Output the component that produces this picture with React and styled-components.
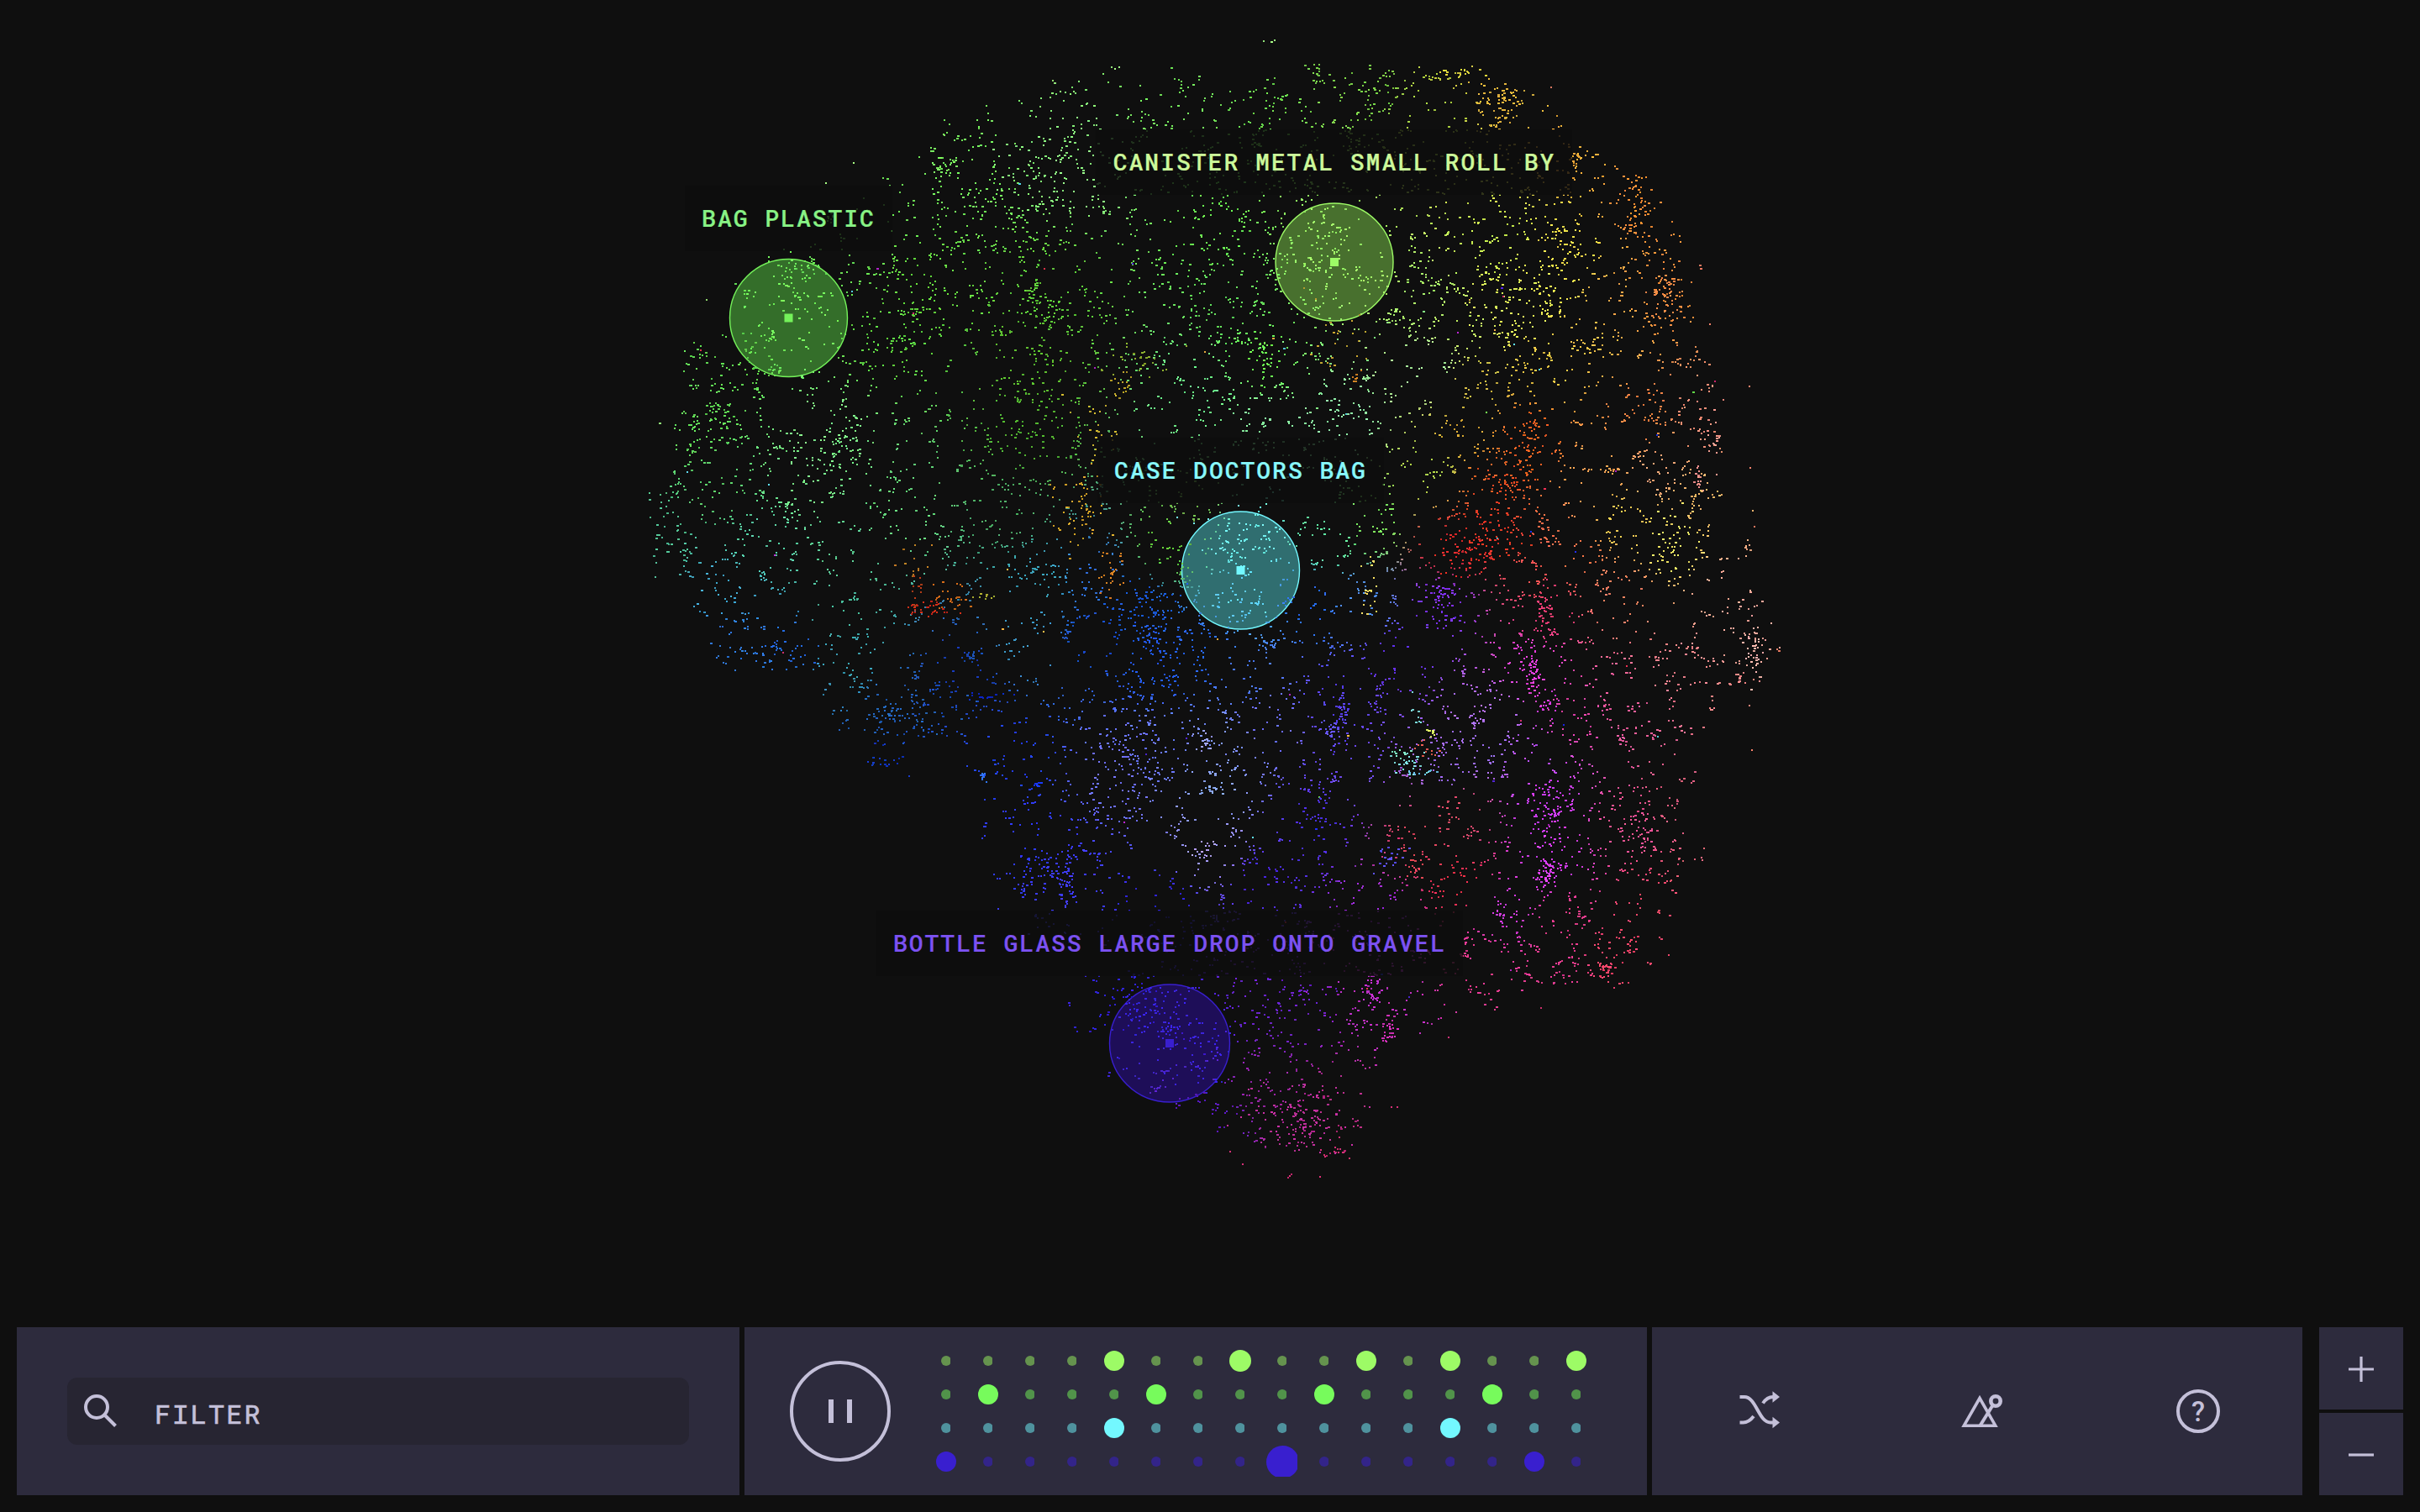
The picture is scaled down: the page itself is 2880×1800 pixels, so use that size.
import React from "react";
import styled, { createGlobalStyle } from "styled-components";

const GlobalStyle = createGlobalStyle`
  *, *::before, *::after { box-sizing: border-box; }
  html, body { margin: 0; padding: 0; background: #0f0f0f; }
  body { overflow: hidden; }
`;

const MONO = `"Roboto Mono", "DejaVu Sans Mono", "Liberation Mono", monospace`;
const INK = "#c4c0d9";
const PANEL = "#2d2b3d";

/* ---------- sound map data ---------- */

const CELL = 60;
const ORIGIN = { x: 740, y: 40 };

// One digit per 60px cell: how crowded that part of the map is.
const DENSITY = [
  "00000000111214133000000",
  "00000012324454533740000",
  "00000154642444444343100",
  "00012267633656434655500",
  "00043645516656454674620",
  "01444656652664467763610",
  "05555324645454325466420",
  "16435236532564633533651",
  "06656335463333346644450",
  "55561454344323424664641",
  "24542236646543365436333",
  "04324331467565345583134",
  "02135324236643434564555",
  "00013653346654545565423",
  "00002213356445456543410",
  "00000003475246235385630",
  "00000003641355354365520",
  "00000001432555334653210",
  "00000000034444534665300",
  "00000000126354521200000",
  "00000000013334300000000",
  "00000000001577300000000",
  "00000000000023100000000",
];

// Coastline of the cloud, in half-scale units.
const COAST = [
  [635, 68], [660, 64], [690, 45], [735, 42], [800, 40], [885, 38], [950, 43], [985, 55], [1005, 68],
  [1030, 98], [1063, 110], [1078, 135], [1092, 155], [1102, 180], [1097, 212], [1118, 235], [1115, 292],
  [1100, 302], [1134, 332], [1134, 370], [1140, 385], [1152, 425], [1138, 456], [1117, 460], [1112, 470],
  [1098, 515], [1108, 560], [1088, 600], [1082, 625], [1045, 640], [1000, 638], [975, 658], [950, 658],
  [905, 673], [892, 690], [886, 702], [886, 725], [876, 747], [840, 748], [775, 730], [725, 712],
  [705, 692], [688, 665], [690, 635], [650, 590], [632, 565], [636, 500], [612, 492], [590, 502],
  [556, 498], [555, 482], [525, 462], [522, 432], [500, 436], [464, 438], [456, 402], [425, 375],
  [415, 322], [440, 300], [430, 262], [442, 225], [462, 205], [475, 180], [505, 160], [530, 130],
  [556, 112], [598, 95], [608, 76],
].map(([x, y]) => [x * 1.8367, y * 1.8367]);

// Hue anchors; each sound takes a blend of the ones nearest to it.
const ANCHORS = [
  [1150, 200, "#74ee5c"], [1280, 200, "#8cf480"], [1000, 300, "#68e052"], [1100, 350, "#62d83e"],
  [1250, 340, "#5fcc3a"], [1230, 430, "#58b82e"], [1220, 520, "#4fb030"], [1060, 400, "#5ccf3e"],
  [940, 378, "#77fb5c"], [880, 420, "#5fd84e"], [830, 500, "#62dc58"], [980, 520, "#84f088"],
  [960, 570, "#78ea88"], [860, 580, "#58c868"], [780, 640, "#4fbf92"], [900, 640, "#56cfa6"],
  [1070, 600, "#66d97a"], [1200, 600, "#4aa860"], [1000, 660, "#5ac890"], [860, 700, "#3fa8cc"],
  [860, 760, "#2f78d8"], [930, 770, "#2468d8"], [1000, 720, "#48b898"], [1010, 785, "#3aa0b0"],
  [1060, 840, "#2260b8"], [1150, 800, "#1838b0"], [1120, 850, "#1d48b8"], [1050, 910, "#1030b8"],
  [1240, 690, "#38a0b8"], [1300, 690, "#2f70d8"], [1350, 720, "#1d5cd8"], [1380, 790, "#2358e8"],
  [1300, 760, "#1848c8"], [1220, 760, "#3f9cc8"], [1200, 900, "#2040f0"], [1220, 1000, "#3038ff"],
  [1270, 1040, "#3f3cff"], [1330, 920, "#7074ff"], [1380, 890, "#6a78ff"], [1450, 880, "#7c90ff"],
  [1440, 940, "#88a0ee"], [1440, 1010, "#9f98f8"], [1500, 850, "#6f70ff"], [1590, 830, "#5a44ee"],
  [1600, 900, "#6a4aee"], [1560, 980, "#4c30e0"], [1500, 1050, "#4a28e0"], [1380, 1080, "#2a20d0"],
  [1350, 1200, "#2c1ed0"], [1420, 1220, "#3a1fd8"], [1500, 1180, "#6a22cc"], [1550, 1200, "#7022cc"],
  [1620, 1180, "#b82cc0"], [1650, 1225, "#c030c0"], [1500, 1300, "#9a28a8"], [1540, 1340, "#b02a90"],
  [1590, 1375, "#c02a70"], [1600, 1310, "#b02a80"], [1450, 1330, "#5a1cc0"], [1640, 1090, "#9a28d8"],
  [1690, 1000, "#d8405c"], [1730, 960, "#d84860"], [1735, 1050, "#e83048"], [1790, 1080, "#c838d8"],
  [1760, 1150, "#e0388c"], [1850, 1150, "#e23a90"], [1860, 1090, "#e03a88"], [1840, 960, "#c83cf0"],
  [1845, 1030, "#d03cf0"], [1820, 900, "#b850f0"], [1770, 890, "#a070f0"], [1720, 920, "#9868ee"],
  [1770, 850, "#b070f0"], [1710, 720, "#7a34f0"], [1820, 790, "#e040d8"], [1840, 730, "#e03c78"],
  [1870, 850, "#e044a8"], [1940, 830, "#e85c98"], [1980, 800, "#f0808c"], [2080, 760, "#f0a49c"],
  [2050, 700, "#f0a494"], [2090, 830, "#f08480"], [1940, 980, "#e85090"], [2000, 960, "#e06080"],
  [1920, 1130, "#f04468"], [1960, 1070, "#ee486c"], [2030, 1040, "#e86478"], [1720, 650, "#d02830"],
  [1765, 630, "#e03424"], [1770, 570, "#e06028"], [1820, 520, "#e85a20"], [1740, 520, "#d8a834"],
  [1750, 460, "#d0b840"], [1840, 440, "#e0c040"], [1900, 560, "#f0a050"], [1970, 560, "#f0a878"],
  [1950, 500, "#f08040"], [2030, 490, "#f08c78"], [1930, 620, "#e8c850"], [1990, 650, "#f4e462"],
  [2020, 600, "#f0b868"], [1870, 660, "#f07048"], [1840, 690, "#f05050"], [1930, 710, "#f08060"],
  [1975, 350, "#f08838"], [1950, 240, "#f08838"], [1880, 180, "#f0a838"], [1780, 110, "#dcac3c"],
  [1740, 85, "#ccc840"], [1710, 130, "#a8d040"], [1620, 90, "#78c848"], [1500, 110, "#6ad84c"],
  [1400, 110, "#72e45a"], [1440, 280, "#68e850"], [1460, 350, "#60d858"], [1500, 430, "#6cf858"],
  [1430, 470, "#6cf08c"], [1500, 500, "#88f0a0"], [1600, 500, "#90f0a8"], [1700, 440, "#a8f0a0"],
  [1588, 312, "#9dfb66"], [1690, 350, "#a8f068"], [1740, 380, "#c4f468"], [1800, 360, "#e4f458"],
  [1840, 340, "#f4f050"], [1780, 290, "#c8f050"], [1860, 300, "#f0e048"], [1880, 400, "#f0c048"],
  [1920, 360, "#f0a848"], [1700, 560, "#b0d84c"], [1630, 620, "#78e85c"], [1580, 640, "#60e8a0"],
  [1390, 650, "#60c83c"], [1420, 600, "#70b850"], [1480, 640, "#68f4ec"], [1480, 710, "#58c8f0"],
  [1560, 720, "#2868f0"], [1620, 720, "#5090f0"], [1430, 780, "#2868f0"], [1480, 810, "#4878f0"],
  [1660, 780, "#6030e0"],
].map(([x, y, c]) => [x, y, parseHex(c)]);

// Families that stand apart from their surroundings: x, y, spread x, spread y, count, colour.
const FAMILIES = [
  [1300, 510, 14, 22, 34, "#c8b030"], [1285, 600, 16, 26, 80, "#d0a028"], [1320, 675, 9, 14, 34, "#d88020"],
  [1335, 448, 9, 12, 20, "#b8a028"], [1350, 425, 30, 12, 34, "#8cae2c"], [1102, 723, 14, 5, 42, "#c82a16"],
  [1090, 706, 4, 12, 14, "#b83c18"], [1134, 710, 10, 8, 40, "#c86818"], [1085, 672, 9, 12, 16, "#b87820"],
  [1172, 710, 8, 2, 10, "#a8b030"], [1628, 702, 6, 20, 26, "#ecd860"], [1598, 400, 22, 26, 30, "#c0a030"],
  [1612, 446, 5, 5, 12, "#d08020"], [1678, 908, 11, 9, 36, "#7cdcdc"], [1664, 893, 6, 6, 12, "#80e8c0"],
  [1690, 918, 14, 2, 12, "#6cc0f0"], [1684, 846, 4, 12, 12, "#7cdcdc"], [1702, 871, 3, 5, 12, "#d8ec60"],
  [1696, 891, 9, 6, 16, "#e05850"], [1650, 1020, 9, 7, 28, "#5a50f0"], [1820, 525, 8, 20, 60, "#f06420"],
  [1795, 575, 16, 10, 50, "#e84c20"], [1745, 655, 18, 16, 70, "#e82c28"], [1785, 635, 22, 18, 50, "#e83c28"],
  [1502, 425, 9, 18, 44, "#6cf850"], [1682, 1030, 5, 7, 22, "#e84858"], [1840, 1040, 7, 9, 50, "#e040f4"],
  [1844, 960, 12, 16, 60, "#cc3cf0"], [1910, 1150, 5, 7, 40, "#f04468"], [2088, 780, 6, 16, 50, "#f4b0a8"],
  [2020, 570, 4, 10, 20, "#f0908c"], [2042, 525, 5, 18, 30, "#f49c90"], [1990, 650, 14, 24, 50, "#f4ec66"],
  [1950, 240, 7, 20, 56, "#f08c30"], [1980, 350, 10, 14, 60, "#f08c48"], [1880, 182, 8, 8, 24, "#f0b038"],
  [1785, 118, 16, 14, 64, "#e8b83c"], [1738, 86, 14, 3, 30, "#d4cc3c"], [1705, 90, 7, 4, 12, "#acc43c"],
  [1625, 112, 14, 20, 44, "#74cc44"], [1824, 800, 5, 16, 50, "#e43cdc"], [1843, 838, 8, 8, 24, "#d43ce0"],
  [1652, 1222, 5, 12, 44, "#d030b8"], [1632, 1180, 6, 10, 36, "#b830c8"], [1590, 1374, 12, 4, 34, "#c82c70"],
  [1267, 1050, 7, 14, 50, "#3f3cff"], [1255, 1025, 18, 20, 36, "#3a3cff"], [1057, 846, 9, 4, 18, "#2468b8"],
  [1085, 855, 30, 14, 50, "#2060b8"], [1156, 781, 8, 3, 20, "#1c4cb0"], [1172, 828, 12, 2, 18, "#0c28c0"],
  [1040, 906, 14, 3, 18, "#1238c0"], [1170, 925, 2, 5, 16, "#2c70f0"], [1233, 933, 4, 2, 10, "#1838f8"],
  [1595, 850, 5, 22, 50, "#5640ee"], [1582, 866, 9, 7, 30, "#6656f4"], [1430, 882, 7, 6, 20, "#98a0f8"],
  [1444, 938, 12, 5, 24, "#88a8ee"], [1432, 1012, 6, 6, 20, "#b0a0f4"], [1345, 900, 24, 30, 90, "#6a70fc"],
  [1712, 712, 9, 8, 40, "#8434f4"], [1840, 728, 6, 18, 46, "#e43c70"], [1950, 990, 8, 14, 44, "#ec5494"],
  [1250, 365, 20, 12, 50, "#5cc838"], [1225, 340, 6, 8, 20, "#60cc38"], [1123, 200, 8, 6, 24, "#7cf060"],
  [1240, 200, 34, 26, 64, "#86f07c"], [1076, 408, 12, 6, 30, "#5ccf3e"], [958, 318, 16, 6, 30, "#6ce858"],
  [855, 485, 12, 6, 30, "#5cd050"], [1000, 530, 16, 16, 50, "#78ee88"], [1365, 720, 26, 12, 60, "#1c58d8"],
  [1370, 760, 10, 12, 50, "#2058e8"], [1800, 360, 30, 24, 60, "#e0f45c"], [1850, 290, 10, 14, 30, "#f0e048"],
  [1475, 640, 28, 18, 60, "#74f4f4"], [1475, 710, 20, 14, 22, "#64d8f8"], [1370, 1210, 22, 22, 76, "#3a22e4"],
  [1425, 1255, 24, 24, 70, "#3a22e0"], [1570, 295, 18, 24, 36, "#98f868"], [1545, 1335, 34, 24, 120, "#c0309c"],
  [1595, 430, 60, 40, 20, "#84f084"], [1540, 1180, 26, 12, 40, "#6a20d0"], [885, 775, 28, 14, 30, "#2c78e0"],
  [945, 780, 20, 10, 24, "#2468d8"],
];

const STRAY = ["#1c2cf0", "#b020c8", "#e8304c", "#6cf050", "#58d0e8", "#f0b040", "#5020d8", "#d82c70"];

function parseHex(hex) {
  return [1, 3, 5].map((i) => parseInt(hex.slice(i, i + 2), 16));
}

function makeRandom(seed) {
  let s = seed;
  return () => {
    s = (s + 0x6d2b79f5) | 0;
    let t = Math.imul(s ^ (s >>> 15), 1 | s);
    t = (t + Math.imul(t ^ (t >>> 7), 61 | t)) ^ t;
    return ((t ^ (t >>> 14)) >>> 0) / 4294967296;
  };
}

function inCoast(x, y) {
  let inside = false;
  for (let i = 0, j = COAST.length - 1; i < COAST.length; j = i++) {
    const [xi, yi] = COAST[i];
    const [xj, yj] = COAST[j];
    if (yi > y !== yj > y && x < ((xj - xi) * (y - yi)) / (yj - yi) + xi) inside = !inside;
  }
  return inside;
}

function hueAt(x, y) {
  let sum = 0;
  const out = [0, 0, 0];
  for (const [ax, ay, c] of ANCHORS) {
    const d = (ax - x) ** 2 + (ay - y) ** 2 + 60;
    const w = 1 / (d * d);
    sum += w;
    out[0] += c[0] * w;
    out[1] += c[1] * w;
    out[2] += c[2] * w;
  }
  return out.map((v) => v / sum);
}

function buildCloud() {
  const rnd = makeRandom(4711);
  const gauss = () => (rnd() + rnd() + rnd() + rnd() - 2) * 1.7;
  const paths = new Map();

  const mark = (x, y, rgb) => {
    const k = 0.92 + rnd() * 0.18;
    const key = rgb.map((v) => Math.min(255, Math.round((v * k) / 12) * 12)).join(",");
    const w = rnd() < 0.3 ? 3 : 2;
    paths.set(key, (paths.get(key) || "") + `M${Math.round(x)} ${Math.round(y)}h${w}v2h-${w}z`);
  };
  const put = (x, y, rgb) => {
    if (inCoast(x + gauss() * 3, y + gauss() * 3)) mark(x, y, rgb);
  };

  DENSITY.forEach((line, row) => {
    [...line].forEach((digit, col) => {
      const count = Math.round(Number(digit) * 6.9);
      let x = 0;
      let y = 0;
      for (let i = 0; i < count; i++) {
        if (i === 0 || rnd() < 0.5) {
          x = ORIGIN.x + (col + rnd()) * CELL + gauss() * 6;
          y = ORIGIN.y + (row + rnd()) * CELL + gauss() * 6;
        } else {
          x += gauss() * 5;
          y += gauss() * 5;
        }
        if (rnd() < 0.006) put(x, y, parseHex(STRAY[Math.floor(rnd() * STRAY.length)]));
        else put(x, y, hueAt(x, y));
      }
    });
  });

  FAMILIES.forEach(([fx, fy, sx, sy, n, c]) => {
    const rgb = parseHex(c);
    for (let i = 0; i < n * 0.75; i++) put(fx + gauss() * sx, fy + gauss() * sy, rgb);
  });

  [[1503, 48], [1512, 49], [1516, 47], [1322, 79], [1326, 81], [1331, 79], [840, 356], [784, 503],
    [1252, 95], [1254, 98], [1015, 193], [982, 217]].forEach(([x, y]) => mark(x, y, [150, 236, 120]));
  [[1534, 1399], [1532, 1401], [1536, 1397], [1570, 1400], [1463, 1370], [1478, 1385], [1655, 1317],
    [1662, 1317], [1723, 1234], [1833, 1199]].forEach(([x, y]) => mark(x, y, [206, 44, 116]));
  [[2081, 459], [2082, 556], [2034, 385], [2022, 315], [2023, 319], [1845, 103], [2087, 626],
    [2114, 772], [2116, 774], [2084, 892]].forEach(([x, y]) => mark(x, y, [236, 124, 100]));

  return [...paths.entries()];
}

const CLOUD = buildCloud();

const PICKS = [
  { name: "BAG PLASTIC", x: 938.5, y: 378.5, rx: 70, fill: "#346e2a", edge: "#74f25a", text: "#88f285" },
  { name: "CANISTER METAL SMALL ROLL BY", x: 1588, y: 312, rx: 70, fill: "#48702e", edge: "#9dfb66", text: "#ccf89a" },
  { name: "CASE DOCTORS BAG", x: 1476.5, y: 679, rx: 70, fill: "#306e70", edge: "#73f8ff", text: "#88f8fb" },
  { name: "BOTTLE GLASS LARGE DROP ONTO GRAVEL", x: 1392, y: 1242, rx: 71.5, fill: "#1e0e58", edge: "#391fcf", text: "#7c52f2" },
];

const TRACKS = [
  { on: "#9dfb66", off: "#65934e", steps: "0000100200101001" },
  { on: "#77fb5c", off: "#51934a", steps: "0100010001000100" },
  { on: "#73f8ff", off: "#4f929e", steps: "0000100000001000" },
  { on: "#391fcf", off: "#332489", steps: "1000000030000010" },
];

/* ---------- layout ---------- */

const Screen = styled.main`
  position: relative;
  display: flex;
  flex-direction: column;
  justify-content: flex-end;
  width: 2880px;
  height: 1800px;
  padding: 20px;
  background: #0f0f0f;
  overflow: hidden;
  font-family: ${MONO};
  color: ${INK};
`;

const SoundMap = styled.svg`
  position: absolute;
  inset: 0;
  width: 2880px;
  height: 1800px;
`;

const Tag = styled.div`
  position: absolute;
  left: ${(p) => p.$x}px;
  top: ${(p) => p.$y - 80}px;
  transform: translate(-50%, -100%);
  height: 78px;
  padding: 0 20px;
  background: rgba(13, 13, 13, 0.83);
  color: ${(p) => p.$color};
  font-size: 28px;
  font-weight: 500;
  line-height: 78px;
  letter-spacing: 2px;
  white-space: pre;
  -webkit-text-stroke: 0.2px ${(p) => p.$color};
`;

const Dock = styled.footer`
  position: relative;
  display: flex;
  height: 200px;
`;

const Panel = styled.section`
  display: flex;
  align-items: center;
  flex: none;
  width: ${(p) => p.$width}px;
  margin-right: ${(p) => p.$after || 6}px;
  padding: ${(p) => p.$padding};
  gap: ${(p) => p.$gap || 0}px;
  background: ${PANEL};
`;

const FilterField = styled.label`
  display: flex;
  align-items: center;
  width: 740px;
  height: 80px;
  padding: 0 20px;
  gap: 44px;
  border-radius: 12px;
  background: #272532;
`;

const FilterText = styled.span`
  padding-top: 6px;
  font-size: 32px;
  line-height: 40px;
  letter-spacing: 2.1px;
  -webkit-text-stroke: 0.7px ${INK};
`;

const Icon = styled.svg`
  display: block;
  flex: none;
  fill: none;
  stroke: ${INK};
  stroke-width: 4;
`;

const PauseButton = styled.button`
  display: flex;
  align-items: center;
  justify-content: center;
  gap: 16px;
  width: 120px;
  height: 120px;
  padding: 0;
  border: 4px solid ${INK};
  border-radius: 50%;
  background: none;
`;

const PauseBar = styled.span`
  width: 6px;
  height: 28px;
  background: ${INK};
`;

const Sequencer = styled.div`
  display: grid;
  grid-template-columns: repeat(16, 50px);
  grid-auto-rows: 40px;
`;

const Step = styled.span`
  display: flex;
  align-items: center;
  justify-content: center;
`;

const SIZES = [12, 24, 26, 39];
const CLIPS = ["inset(0 1px 0 0)", "none", "none", "inset(0 1.5px 1.5px 0)"];

const StepDot = styled.i`
  flex: none;
  width: ${(p) => SIZES[p.$level]}px;
  height: ${(p) => SIZES[p.$level]}px;
  border-radius: 50%;
  background: ${(p) => p.$color};
  clip-path: ${(p) => CLIPS[p.$level]};
`;

const ToolButton = styled.button`
  display: flex;
  align-items: center;
  justify-content: center;
  flex: none;
  width: 80px;
  height: 80px;
  padding: 0;
  border: 0;
  background: none;
`;

const HelpRing = styled.span`
  width: 52px;
  height: 52px;
  border: 4px solid ${INK};
  border-radius: 50%;
  color: ${INK};
  font: 500 33px/45px Roboto, sans-serif;
  text-align: center;
`;

const ZoomColumn = styled.div`
  display: flex;
  flex-direction: column;
  gap: 4px;
  width: 100px;
`;

const ZoomButton = styled.button`
  display: flex;
  align-items: center;
  justify-content: center;
  flex: 1;
  padding: 2px 0 0;
  border: 0;
  background: ${PANEL};
`;

function Cloud() {
  return (
    <SoundMap viewBox="0 0 2880 1800">
      {PICKS.map((p) => (
        <ellipse key={p.name} cx={p.x} cy={p.y} rx={p.rx} ry="70" fill={p.fill} stroke={p.edge} strokeWidth="1.4" />
      ))}
      <g shapeRendering="crispEdges">
        {CLOUD.map(([rgb, d]) => (
          <path key={rgb} d={d} fill={`rgb(${rgb})`} />
        ))}
      </g>
      {PICKS.map((p) => (
        <rect key={p.name} x={p.x - 5} y={p.y - 5} width="10" height="10" fill={p.edge} />
      ))}
    </SoundMap>
  );
}

export default function App() {
  return (
    <Screen>
      <GlobalStyle />
      <Cloud />
      {PICKS.map((p) => (
        <Tag key={p.name} $x={p.x} $y={p.y} $color={p.text}>
          {p.name}
        </Tag>
      ))}
      <Dock>
        <Panel $width={860} $padding="0 60px">
          <FilterField>
            <Icon width="40" height="40" viewBox="0 0 40 40">
              <circle cx="15" cy="15" r="13" />
              <path d="M24 24L37.5 37.5" />
            </Icon>
            <FilterText>FILTER</FilterText>
          </FilterField>
        </Panel>
        <Panel $width={1074} $padding="0 0 0 54px" $gap={41}>
          <PauseButton aria-label="Pause">
            <PauseBar />
            <PauseBar />
          </PauseButton>
          <Sequencer>
            {TRACKS.map((t) =>
              [...t.steps].map((s, i) => (
                <Step key={t.on + i}>
                  <StepDot $level={Number(s)} $color={s === "0" ? t.off : t.on} />
                </Step>
              ))
            )}
          </Sequencer>
        </Panel>
        <Panel $width={774} $padding="0 0 0 90px" $gap={180} $after={20}>
          <ToolButton aria-label="Shuffle">
            <Icon width="80" height="80" viewBox="6 0 80 80">
              <path d="M20.5 23h5.5c14 0 17 30.5 31 30.5h3" />
              <path d="M20.5 53.5h4c5.500 0 9-3 12.500-7.500" />
              <path d="M48 30.500c3-4.500 6.500-7.500 12-7.500" />
              <path d="M59.500 16.200L68 23l-8.500 6.800zM59.500 46.700L68 53.500l-8.500 6.800z" fill={INK} stroke="none" />
            </Icon>
          </ToolButton>
          <ToolButton aria-label="Tempo">
            <Icon width="80" height="80" viewBox="6 0 80 80">
              <path d="M27.300 57.200L46 24.500L64.700 57.200z" strokeWidth="3.600" />
              <circle cx="65" cy="28" r="5.700" strokeWidth="4.600" />
              <path d="M61.500 33L46.300 57.500" />
            </Icon>
          </ToolButton>
          <ToolButton aria-label="Help">
            <HelpRing>?</HelpRing>
          </ToolButton>
        </Panel>
        <ZoomColumn>
          <ZoomButton aria-label="Zoom in">
            <Icon width="30" height="30" viewBox="0 0 30 30">
              <path d="M0 15H30M15 0V30" strokeWidth="3.200" />
            </Icon>
          </ZoomButton>
          <ZoomButton aria-label="Zoom out">
            <Icon width="30" height="30" viewBox="0 0 30 30">
              <path d="M0 15H30" strokeWidth="3.200" />
            </Icon>
          </ZoomButton>
        </ZoomColumn>
      </Dock>
    </Screen>
  );
}
